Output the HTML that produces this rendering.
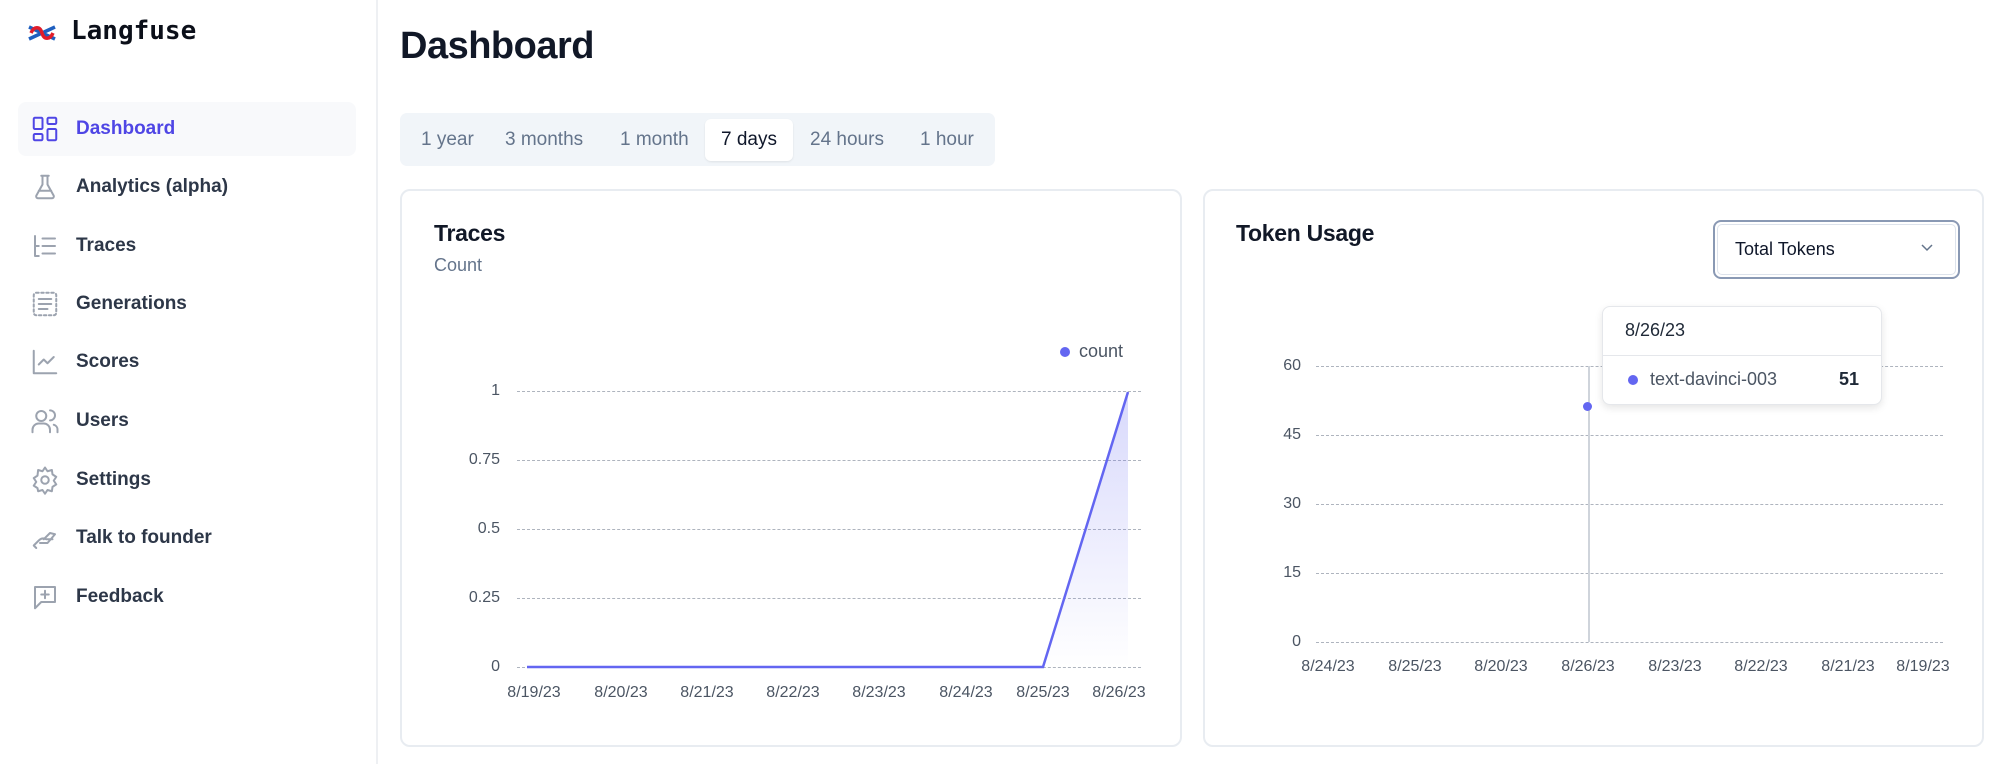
<!DOCTYPE html>
<html><head><meta charset="utf-8"><style>
*{box-sizing:border-box;margin:0;padding:0}
body{width:2000px;height:764px;background:#fff;font-family:"Liberation Sans",sans-serif;position:relative;overflow:hidden;color:#111827}
.a{position:absolute}
.side{left:0;top:0;width:378px;height:764px;border-right:2px solid #eef0f3}
.nav{left:18px;width:338px;height:54px;display:flex;align-items:center;font-size:19px;font-weight:bold;color:#2d3748;border-radius:8px}
.nav svg{position:absolute;left:12px;width:30px;height:30px;fill:none;stroke:#9ca3af;stroke-width:1.6;stroke-linecap:round;stroke-linejoin:round}
.nav span{position:absolute;left:58px}
.tab{top:119px;height:42px;line-height:42px;font-size:19px;color:#64748b}
.card{top:189px;height:558px;border:2px solid #e8ecf1;border-radius:10px}
.grid{height:0;border-top:1.5px dashed #aeb4be}
.yl{font-size:16px;color:#4b5563;text-align:right;width:40px}
.xl{font-size:16px;color:#4b5563;width:80px;text-align:center;margin-left:-40px}
</style></head><body>
<div class="a side"></div>
<svg class="a" style="left:27px;top:23px" width="30" height="20" viewBox="0 0 30 20"><path d="M2 4l26 12M2 16L28 4" stroke="#1f5fbf" stroke-width="3.5" fill="none"/><path d="M4 10c3-7 9-7 11 0s8 7 11 0" stroke="#e11d2a" stroke-width="3.5" fill="none"/></svg>
<div class="a" style="left:71px;top:16px;font-family:'DejaVu Sans Mono','Liberation Mono',monospace;font-weight:bold;font-size:26px;color:#0b0f19">Langfuse</div>

<div class="a nav" style="top:102px;background:#f8f9fb;color:#4f46e5"><svg viewBox="0 0 24 24" style="stroke:#4f46e5"><rect x="3" y="3" width="7" height="9" rx="1"/><rect x="14" y="3" width="7" height="5" rx="1"/><rect x="14" y="12" width="7" height="9" rx="1"/><rect x="3" y="16" width="7" height="5" rx="1"/></svg><span>Dashboard</span></div>
<div class="a nav" style="top:160px"><svg viewBox="0 0 24 24"><path d="M9 3h6M10 3v7l-5 9a1.5 1.5 0 0 0 1.3 2h11.4a1.5 1.5 0 0 0 1.3-2l-5-9V3M7 15h10"/></svg><span>Analytics (alpha)</span></div>
<div class="a nav" style="top:219px"><svg viewBox="0 0 24 24"><path d="M4 4v16M4 12h3M4 20h3M10 6h10M10 12h10M10 18h10"/></svg><span>Traces</span></div>
<div class="a nav" style="top:277px"><svg viewBox="0 0 24 24"><rect x="3" y="3" width="18" height="18" rx="2" stroke-dasharray="2 2"/><path d="M7 8h10M7 12h10M7 16h7"/></svg><span>Generations</span></div>
<div class="a nav" style="top:335px"><svg viewBox="0 0 24 24"><path d="M3 3v18h18M7 14l4-4 3 3 5-5"/></svg><span>Scores</span></div>
<div class="a nav" style="top:394px"><svg viewBox="0 0 24 24"><circle cx="9" cy="8" r="4"/><path d="M2 21v-2a5 5 0 0 1 5-5h4a5 5 0 0 1 5 5v2M16 3.5a4 4 0 0 1 0 8M22 21v-2a4 4 0 0 0-3-4"/></svg><span>Users</span></div>
<div class="a nav" style="top:453px"><svg viewBox="0 0 24 24"><circle cx="12" cy="12" r="3"/><path d="M12 2l2 3 3.5-1 .5 3.5 3 2-2 3 2 3-3 2-.5 3.5-3.5-1-2 3-2-3-3.5 1L6 18.5l-3-2 2-3-2-3 3-2L6.5 4 10 5z"/></svg><span>Settings</span></div>
<div class="a nav" style="top:511px"><svg viewBox="0 0 24 24"><path d="M3 18l4-4c2-2 4-2 6-1h5M11 13l5-5 4 1-6 7H8M3 18l2 2"/></svg><span>Talk to founder</span></div>
<div class="a nav" style="top:570px"><svg viewBox="0 0 24 24"><path d="M4 4h16v12H9l-5 5zM12 7v6M9 10h6"/></svg><span>Feedback</span></div>

<div class="a" style="left:400px;top:25px;font-size:38px;font-weight:bold;color:#111827;letter-spacing:-0.5px">Dashboard</div>
<div class="a" style="left:400px;top:113px;width:595px;height:53px;background:#f1f5f9;border-radius:7px"></div>
<div class="a" style="left:705px;top:119px;width:88px;height:42px;background:#fff;border-radius:6px;box-shadow:0 1px 2px rgba(0,0,0,.08)"></div>
<div class="a tab" style="left:421px">1 year</div>
<div class="a tab" style="left:505px">3 months</div>
<div class="a tab" style="left:620px">1 month</div>
<div class="a tab" style="left:721px;color:#0f172a">7 days</div>
<div class="a tab" style="left:810px">24 hours</div>
<div class="a tab" style="left:920px">1 hour</div>

<div class="a card" style="left:400px;width:782px"></div>
<div class="a" style="left:434px;top:220px;font-size:23px;font-weight:bold;letter-spacing:-0.3px">Traces</div>
<div class="a" style="left:434px;top:255px;font-size:18px;color:#64748b">Count</div>
<div class="a" style="left:1060px;top:347px;width:10px;height:10px;border-radius:50%;background:#6366f1"></div>
<div class="a" style="left:1079px;top:341px;font-size:18px;color:#4b5563">count</div>
<div class="a grid" style="left:517px;width:624px;top:391px"></div>
<div class="a grid" style="left:517px;width:624px;top:460px"></div>
<div class="a grid" style="left:517px;width:624px;top:529px"></div>
<div class="a grid" style="left:517px;width:624px;top:598px"></div>
<div class="a grid" style="left:517px;width:624px;top:667px"></div>
<div class="a yl" style="left:460px;top:382px">1</div>
<div class="a yl" style="left:460px;top:451px">0.75</div>
<div class="a yl" style="left:460px;top:520px">0.5</div>
<div class="a yl" style="left:460px;top:589px">0.25</div>
<div class="a yl" style="left:460px;top:658px">0</div>
<svg class="a" style="left:0;top:0" width="2000" height="764"><defs><linearGradient id="g" x1="0" y1="0" x2="0" y2="1"><stop offset="0" stop-color="#6366f1" stop-opacity=".25"/><stop offset="1" stop-color="#6366f1" stop-opacity="0"/></linearGradient></defs><path d="M1043 667L1128 392V667Z" fill="url(#g)"/><path d="M527 667H1043L1128 392" stroke="#6366f1" stroke-width="2.5" fill="none"/></svg>
<div class="a xl" style="left:534px;top:684px">8/19/23</div>
<div class="a xl" style="left:621px;top:684px">8/20/23</div>
<div class="a xl" style="left:707px;top:684px">8/21/23</div>
<div class="a xl" style="left:793px;top:684px">8/22/23</div>
<div class="a xl" style="left:879px;top:684px">8/23/23</div>
<div class="a xl" style="left:966px;top:684px">8/24/23</div>
<div class="a xl" style="left:1043px;top:684px">8/25/23</div>
<div class="a xl" style="left:1119px;top:684px">8/26/23</div>

<div class="a card" style="left:1203px;width:781px"></div>
<div class="a" style="left:1236px;top:220px;font-size:23px;font-weight:bold;letter-spacing:-0.3px">Token Usage</div>
<div class="a" style="left:1713px;top:220px;width:247px;height:59px;border:2.5px solid #8a99b4;border-radius:8px;padding:2px"><div style="width:100%;height:100%;border:1.5px solid #dde3ec;border-radius:5px;background:#fff"></div></div>
<div class="a" style="left:1735px;top:239px;font-size:18px;color:#0f172a">Total Tokens</div>
<svg class="a" style="left:1920px;top:243px" width="14" height="10" viewBox="0 0 14 10"><path d="M2 2l5 5 5-5" stroke="#64748b" stroke-width="1.5" fill="none"/></svg>
<div class="a" style="left:1840px;top:314px;font-size:18px;color:#4b5563">i-003</div>
<div class="a grid" style="left:1316px;width:627px;top:366px"></div>
<div class="a grid" style="left:1316px;width:627px;top:435px"></div>
<div class="a grid" style="left:1316px;width:627px;top:504px"></div>
<div class="a grid" style="left:1316px;width:627px;top:573px"></div>
<div class="a grid" style="left:1316px;width:627px;top:642px"></div>
<div class="a yl" style="left:1261px;top:357px">60</div>
<div class="a yl" style="left:1261px;top:426px">45</div>
<div class="a yl" style="left:1261px;top:495px">30</div>
<div class="a yl" style="left:1261px;top:564px">15</div>
<div class="a yl" style="left:1261px;top:633px">0</div>
<div class="a" style="left:1588px;top:366px;width:1.5px;height:276px;background:#cfd4db"></div>
<div class="a" style="left:1583px;top:402px;width:9px;height:9px;border-radius:50%;background:#6366f1"></div>
<div class="a xl" style="left:1328px;top:658px">8/24/23</div>
<div class="a xl" style="left:1415px;top:658px">8/25/23</div>
<div class="a xl" style="left:1501px;top:658px">8/20/23</div>
<div class="a xl" style="left:1588px;top:658px">8/26/23</div>
<div class="a xl" style="left:1675px;top:658px">8/23/23</div>
<div class="a xl" style="left:1761px;top:658px">8/22/23</div>
<div class="a xl" style="left:1848px;top:658px">8/21/23</div>
<div class="a xl" style="left:1923px;top:658px">8/19/23</div>

<div class="a" style="left:1602px;top:306px;width:280px;height:99px;background:#fff;border:1.5px solid #e5e7eb;border-radius:8px;box-shadow:0 3px 8px rgba(0,0,0,.1)">
<div style="position:absolute;left:22px;top:13px;font-size:18px;color:#1f2937">8/26/23</div>
<div style="position:absolute;left:0;right:0;top:48px;border-top:1.5px solid #e5e7eb"></div>
<div style="position:absolute;left:25px;top:68px;width:10px;height:10px;border-radius:50%;background:#6366f1"></div>
<div style="position:absolute;left:47px;top:62px;font-size:18px;color:#4b5563">text-davinci-003</div>
<div style="position:absolute;right:22px;top:62px;font-size:18px;font-weight:bold;color:#1f2937">51</div>
</div>
</body></html>
